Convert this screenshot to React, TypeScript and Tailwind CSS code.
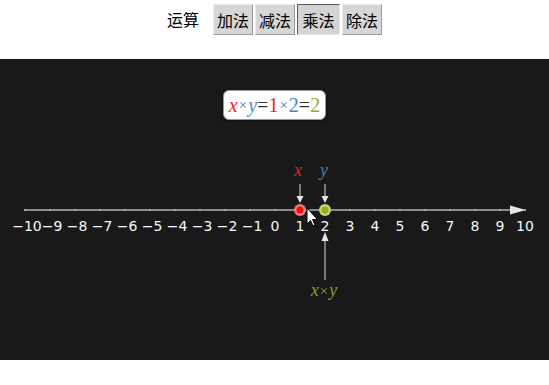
import React from 'react';

const ops = ['加法', '减法', '乘法', '除法'];

const ticks = Array.from({ length: 21 }, (_, i) => i - 10);

const App: React.FC = () => {
  const active = '乘法';
  // svg starts at page y=120; axis at page y=210
  const ax = (v: number) => 275 + v * 25;
  const axisY = 90;

  return (
    <div className="w-[549px] h-[385px] bg-white" style={{ fontFamily: '"Noto Sans CJK SC", sans-serif' }}>
      <div className="h-[59px] flex justify-center items-start pt-[4px]">
        <span className="text-[16px] text-black mr-[14px] mt-[5px] leading-[20px]">运算</span>
        <div className="flex gap-[2px]">
          {ops.map((op) => (
            <button
              key={op}
              className={
                op === active
                  ? 'w-[43px] h-[31px] text-[16px] leading-none text-black bg-[#d4d4d4] border border-t-[#5a5a5a] border-l-[#5a5a5a] border-r-[#e8e8e8] border-b-[#e8e8e8]'
                  : 'w-[40px] h-[31px] text-[16px] leading-none text-black bg-[#d6d6d6] border border-t-[#ececec] border-l-[#ececec] border-r-[#9a9a9a] border-b-[#9a9a9a]'
              }
            >
              {op}
            </button>
          ))}
        </div>
      </div>

      <div className="h-[301px] bg-[#191919] flex flex-col items-center">
        <div
          className="mt-[31px] h-[30px] px-[5px] flex items-center bg-white rounded-[6px] border border-[#9a9a9a] shadow-[0_1px_2px_rgba(0,0,0,0.5)] text-[20px] leading-none"
          style={{ fontFamily: '"Liberation Serif", serif' }}
        >
          <span className="italic text-[#ff2020]">x</span>
          <span className="text-[#3a7bc8] text-[15px] mx-[1px]">×</span>
          <span className="italic text-[#4f8fd0]">y</span>
          <span className="text-[#333]">=</span>
          <span className="text-[#ee1c1c]">1</span>
          <span className="text-[#3a7bc8] text-[15px] mx-[1px]">×</span>
          <span className="text-[#4a80c0]">2</span>
          <span className="text-[#333]">=</span>
          <span className="text-[#9aab1c]">2</span>
        </div>

        <svg width="549" height="240" viewBox="0 0 549 240" className="block">
          {/* axis */}
          <line x1="24" y1={axisY} x2="512" y2={axisY} stroke="#8a8a8a" strokeWidth="2" />
          <polygon points={`510,${axisY - 4.5} 526,${axisY} 510,${axisY + 4.5}`} fill="#e6e6e6" />
          {ticks.map((t) => (
            <rect key={`t${t}`} x={ax(t) - 1} y={axisY - 1} width="2" height="2" fill="#a8a8a8" />
          ))}
          {ticks.map((t) => (
            <text
              key={`l${t}`}
              x={ax(t) + (t < 0 ? 2 : 0)}
              y={111}
              textAnchor="middle"
              fontSize="14"
              fill="#f4f8ff"
              fontFamily='"DejaVu Sans", sans-serif'
            >
              {t < 0 ? `−${-t}` : t}
            </text>
          ))}

          {/* x arrow */}
          <text x="298" y="56" textAnchor="middle" fontSize="18" fontStyle="italic" fill="#e02424" fontFamily='"Liberation Serif", serif'>x</text>
          <line x1="300" y1="64" x2="300" y2="77" stroke="#9a9a9a" strokeWidth="1.5" />
          <polygon points="296.5,76 303.5,76 300,83" fill="#e6e6e6" />

          {/* y arrow */}
          <text x="324" y="56" textAnchor="middle" fontSize="18" fontStyle="italic" fill="#5b7bb0" fontFamily='"Liberation Serif", serif'>y</text>
          <line x1="325" y1="64" x2="325" y2="77" stroke="#9a9a9a" strokeWidth="1.5" />
          <polygon points="321.5,76 328.5,76 325,83" fill="#e6e6e6" />

          {/* product arrow */}
          <line x1="325" y1="160" x2="325" y2="119" stroke="#9a9a9a" strokeWidth="1.5" />
          <polygon points="321.5,121 328.5,121 325,112" fill="#e6e6e6" />
          <text x="324" y="176" textAnchor="middle" fontSize="18" fill="#8e9b2c" fontFamily='"Liberation Serif", serif'>
            <tspan fontStyle="italic">x</tspan>
            <tspan fontSize="15" dx="1">×</tspan>
            <tspan fontStyle="italic" dx="1">y</tspan>
          </text>

          {/* points */}
          <circle cx="300" cy={axisY} r="6" fill="#f07878" />
          <circle cx="300" cy={axisY} r="3.5" fill="#ee1010" />
          <circle cx="325" cy={axisY} r="6" fill="#c9d27a" />
          <circle cx="325" cy={axisY} r="3.5" fill="#9aab1c" />

          {/* mouse cursor */}
          <path
            d="M307 88 L307 104 L310.5 100.5 L313 106 L315 105 L312.6 99.6 L317.5 99.5 Z"
            fill="#ffffff"
            stroke="#000000"
            strokeWidth="1"
            strokeLinejoin="round"
          />
        </svg>
      </div>
    </div>
  );
};

export default App;
